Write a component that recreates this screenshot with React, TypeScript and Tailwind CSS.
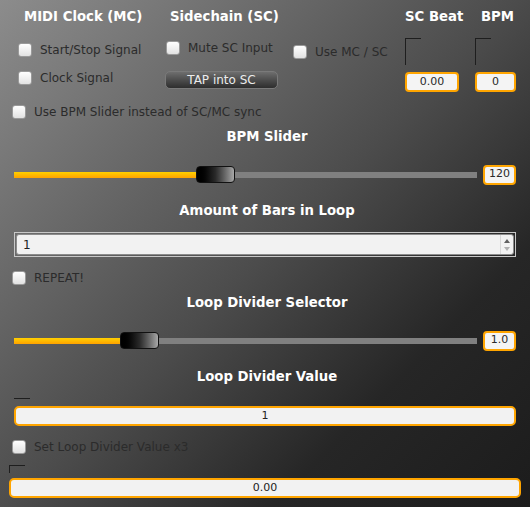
import React from 'react';

const font = "font-['DejaVu_Sans',sans-serif]";

function Check({ label }: { label: string }) {
    return (
        <div className="flex items-center h-[14px]">
            <div className="w-[14px] h-[14px] rounded-[3px] border border-[#9a9a9a] bg-linear-to-b from-[#ffffff] to-[#e2e2e2] shrink-0" />
            <span className="ml-[8px] text-[12px] leading-none text-[#2b2b2b] whitespace-nowrap">{label}</span>
        </div>
    );
}

function Heading({ text }: { text: string }) {
    return <p className="text-[13.25px] leading-[20px] font-bold text-white whitespace-nowrap">{text}</p>;
}

function ValueBox({ value, w }: { value: string; w: string }) {
    return (
        <div className={`${w} h-[20px] rounded-[4px] border-2 border-[#ffa500] bg-[#f4f4f4] flex items-center justify-center text-[11px] text-[#2a2a2a]`}>
            {value}
        </div>
    );
}

function Bracket({ w }: { w: string }) {
    return <div className={`${w} h-[27px] border-l border-t border-[#1e1e1e]`} />;
}

function Slider({ fill }: { fill: number }) {
    /* fill = px from track start to handle left */
    return (
        <div className="flex items-center h-[21px] pl-[14px]">
            <div className="flex items-center w-[463px]">
                <div className="h-[6px] bg-linear-to-b from-[#ffd000] to-[#ffa200]" style={{ width: fill }} />
                <div className="w-[39px] h-[17px] rounded-[4px] border border-[#111] bg-linear-to-r from-[#000000] via-[#2a2a2a] to-[#a8a8a8] shrink-0" />
                <div className="h-[6px] flex-1 bg-[#808080]" />
            </div>
        </div>
    );
}

export default function App() {
    return (
        <div className={`${font} w-[530px] h-[507px] overflow-hidden bg-[linear-gradient(135deg,#8c8c8c_0%,#4c4c4c_50%,#262626_75%,#1c1c1c_100%)] flex flex-col`}>
            {/* top section */}
            <div className="h-[95px] flex flex-row pt-[7px]">
                <div className="ml-[18px] w-[147px] flex flex-col">
                    <div className="pl-[6px]"><Heading text="MIDI Clock (MC)" /></div>
                    <div className="mt-[16px]"><Check label="Start/Stop Signal" /></div>
                    <div className="mt-[14px]"><Check label="Clock Signal" /></div>
                </div>
                <div className="w-[128px] flex flex-col">
                    <div className="pl-[5px]"><Heading text="Sidechain (SC)" /></div>
                    <div className="mt-[14px] ml-[1px]"><Check label="Mute SC Input" /></div>
                    <button className="mt-[16px] w-[113px] h-[18px] rounded-[5px] border border-[#7a7a7a] bg-linear-to-b from-[#6e6e6e] to-[#2e2e2e] text-[12px] leading-none text-[#ececec]">
                        TAP into SC
                    </button>
                </div>
                <div className="w-[112px] pt-[38px]">
                    <Check label="Use MC / SC" />
                </div>
                <div className="w-[70px] flex flex-col">
                    <Heading text="SC Beat" />
                    <div className="mt-[11px]"><Bracket w="w-[16px]" /></div>
                    <div className="mt-[7px]"><ValueBox value="0.00" w="w-[54px]" /></div>
                </div>
                <div className="w-[41px] flex flex-col">
                    <div className="pl-[6px]"><Heading text="BPM" /></div>
                    <div className="mt-[11px]"><Bracket w="w-[16px]" /></div>
                    <div className="mt-[7px]"><ValueBox value="0" w="w-[41px]" /></div>
                </div>
            </div>

            <div className="mt-[10px] ml-[12px]"><Check label="Use BPM Slider instead of SC/MC sync" /></div>

            <div className="mt-[8px] flex justify-center pl-[4px]"><Heading text="BPM Slider" /></div>

            <div className="mt-[17px] flex items-center">
                <Slider fill={182} />
                <div className="ml-[6px]"><ValueBox value="120" w="w-[33px]" /></div>
            </div>

            <div className="mt-[16px] flex justify-center pl-[4px]"><Heading text="Amount of Bars in Loop" /></div>

            <div className="mt-[11px] ml-[14px] w-[502px] h-[25px] border border-[#c8c8c8] p-[1px]">
                <div className="w-full h-full rounded-[3px] border border-[#8c8c8c] bg-[#f2f2f2] flex items-center">
                    <span className="ml-[6px] text-[12px] text-[#222] flex-1">1</span>
                    <div className="w-[12px] h-full flex flex-col items-center justify-center gap-[4px] border-l border-[#d8d8d8] mr-[1px]">
                        <div className="w-0 h-0 border-l-[3px] border-r-[3px] border-b-[4px] border-l-transparent border-r-transparent border-b-[#606060]" />
                        <div className="w-0 h-0 border-l-[3px] border-r-[3px] border-t-[4px] border-l-transparent border-r-transparent border-t-[#b0b0b0]" />
                    </div>
                </div>
            </div>

            <div className="mt-[14px] ml-[12px]"><Check label="REPEAT!" /></div>

            <div className="mt-[8px] flex justify-center pl-[4px]"><Heading text="Loop Divider Selector" /></div>

            <div className="mt-[17px] flex items-center">
                <Slider fill={106} />
                <div className="ml-[6px]"><ValueBox value="1.0" w="w-[33px]" /></div>
            </div>

            <div className="mt-[16px] flex justify-center pl-[4px]"><Heading text="Loop Divider Value" /></div>

            <div className="mt-[11px] ml-[14px] w-[16px] h-px bg-[#1e1e1e]" />
            <div className="mt-[7px] ml-[14px] w-[502px] h-[20px] rounded-[5px] border-2 border-[#ffa500] bg-[#f2f2f2] flex items-center justify-center text-[11px] text-[#222]">
                1
            </div>

            <div className="mt-[14px] ml-[12px]"><Check label="Set Loop Divider Value x3" /></div>

            <div className="mt-[11px] ml-[9px] w-[16px] h-[8px] border-l border-t border-[#1e1e1e]" />
            <div className="mt-[5px] ml-[9px] w-[512px] h-[20px] rounded-[5px] border-2 border-[#ffa500] bg-[#f2f2f2] flex items-center justify-center text-[11px] text-[#222]">
                0.00
            </div>
        </div>
    );
}
